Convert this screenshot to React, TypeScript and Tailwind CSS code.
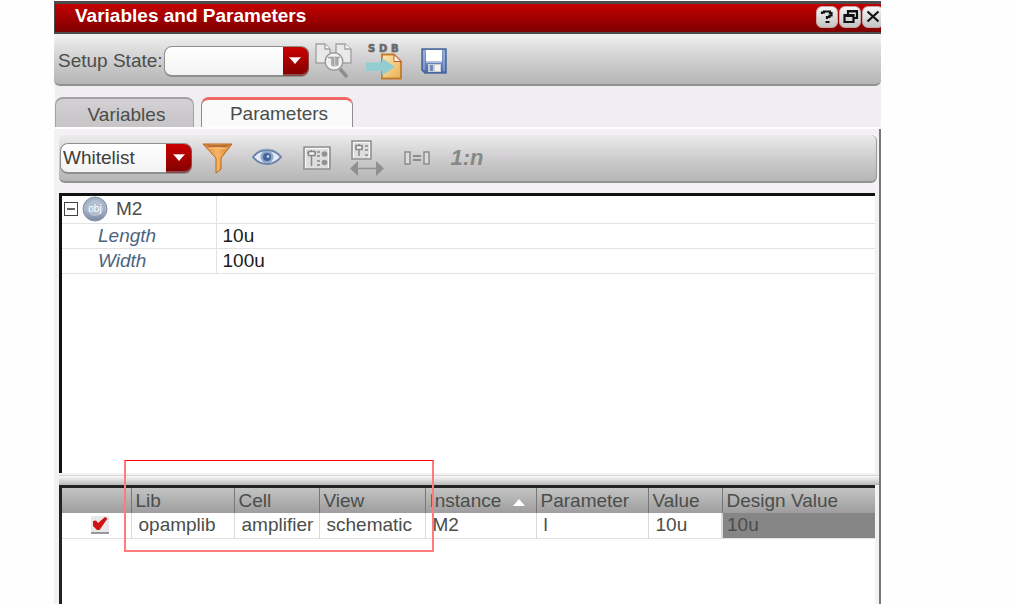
import React, { useState } from "react";

const TOOLBAR =
  "flex h-12 items-center rounded-md border-b-2 border-[#8f928f] bg-linear-to-b from-[#ececec] via-[#cfcdcf] to-[#b4b6b4]";

function DropDown({
  label,
  hidden,
  options,
  width,
}: {
  label: string;
  hidden?: boolean;
  options: string[];
  width: string;
}) {
  const id = label.toLowerCase().replace(/\W+/g, "-");
  return (
    <>
      {!hidden && (
        <label htmlFor={id} className="whitespace-nowrap">
          {label}
        </label>
      )}
      <div className={`relative ml-px h-[31px] shrink-0 ${width}`}>
        <select
          id={id}
          aria-label={hidden ? label : undefined}
          className="h-full w-full appearance-none rounded-lg border border-b-2 border-[#8e908e] bg-linear-to-b from-white to-[#f3f3f3] pl-0.5 pr-7 text-[19px] leading-6 text-[#3c403c]"
        >
          {options.map((o) => (
            <option key={o}>{o}</option>
          ))}
        </select>
        <span className="pointer-events-none absolute inset-y-px right-0 flex w-[26px] items-center justify-center rounded-r-lg border-r border-b-2 border-[#8a4a4a] bg-linear-to-b from-[#cc0000] to-[#860000]">
          <svg width="12" height="7" viewBox="0 0 12 7">
            <path d="M0 0h12L6 7z" fill="#fff" />
            <path d="M1 0.5h10" stroke="#e9b0b0" />
          </svg>
        </span>
      </div>
    </>
  );
}

function IconButton({ label, children }: { label: string; children: React.ReactNode }) {
  return (
    <button type="button" aria-label={label} className="flex h-10 w-[50px] shrink-0 items-center justify-center">
      {children}
    </button>
  );
}

const SearchDocsIcon = () => (
  <svg width="37" height="36" viewBox="0 0 37 36" fill="none">
    <g stroke="#a3a3a3" strokeWidth="1.4" fill="#e9e9e9">
      <path d="M1 1h9l5 5v14H1z" />
      <path d="M21 1h9l6 5v14H21z" />
      <path d="M10 1v5h5M30 1v5h6" fill="#fff" />
    </g>
    <path d="M25 26l7 8" stroke="#8d8d8d" strokeWidth="3.5" />
    <circle cx="19" cy="18.500" r="7" fill="#d7d7d7" stroke="#f2f2f2" strokeWidth="3" />
    <circle cx="19" cy="18.500" r="8.800" stroke="#9a9a9a" strokeWidth="1.500" />
    <path d="M13 14.500h4v8M21 22.500v-8h4" stroke="#a0a0a0" strokeWidth="1.500" />
    <path d="M18.500 14v9M22.500 15v8" stroke="#a0a0a0" strokeWidth="1.300" />
    <path d="M15 16v7" stroke="#f7f7f7" strokeWidth="1.500" />
  </svg>
);

const SdbIcon = () => (
  <svg width="38" height="37" viewBox="0 0 38 37">
    <defs>
      <linearGradient id="page" x1="0" y1="0" x2="1" y2="1">
        <stop offset="0" stopColor="#fbe9b4" />
        <stop offset="1" stopColor="#e9b052" />
      </linearGradient>
    </defs>
    <g fontFamily="DejaVu Sans" fontWeight="bold" fontSize="10" fill="#6a6a6a" stroke="#6a6a6a" strokeWidth="0.7">
      <text x="3" y="8.500">S</text>
      <text x="14" y="8.500">D</text>
      <text x="26" y="8.500">B</text>
    </g>
    <path d="M17 11.500h12l7 7v17H17z" fill="url(#page)" stroke="#c47a28" strokeWidth="1.800" />
    <path d="M29 11.500l7 7h-7z" fill="#fff" stroke="#c8552a" />
    <path d="M1 19.500h16v-4.500l13 8.700-13 8.800V28H1z" fill="#94cdd0" />
  </svg>
);

const SaveIcon = () => (
  <svg width="26" height="26" viewBox="0 0 26 26">
    <defs>
      <linearGradient id="disk" x1="0" y1="0" x2="0" y2="1">
        <stop offset="0" stopColor="#8aa5d0" />
        <stop offset="1" stopColor="#4a6cab" />
      </linearGradient>
    </defs>
    <path d="M1 1h24v24H4l-3-3z" fill="url(#disk)" stroke="#47659c" strokeWidth="1.500" />
    <path d="M5 2h16v11H5z" fill="#fff" />
    <path d="M5 13h16v2H5z" fill="#aebfdd" />
    <path d="M3 3v19M23 3v20" stroke="#a9bfe2" />
    <path d="M7 16h13v8H7z" fill="#c9cdd4" />
    <path d="M9 17h3v6H9z" fill="#6f8bbb" />
    <path d="M14 17h5v6h-5z" fill="#f3f3f3" />
  </svg>
);

const FunnelIcon = () => (
  <svg width="31" height="31" viewBox="0 0 31 31">
    <defs>
      <linearGradient id="funnel" x1="0" y1="0" x2="1" y2="0">
        <stop offset="0" stopColor="#d98434" />
        <stop offset="0.5" stopColor="#f8b566" />
        <stop offset="1" stopColor="#d07a2a" />
      </linearGradient>
    </defs>
    <path d="M1 1h29L19 15v11l-5 4V15z" fill="url(#funnel)" stroke="#b8651c" strokeWidth="1" />
    <path d="M4 2h23l-3 2H7z" fill="#b5703a" />
    <path d="M6 5h19l-1 1H7z" fill="#f7bd7a" />
  </svg>
);

const EyeIcon = () => (
  <svg width="30" height="20" viewBox="0 0 30 20">
    <path d="M1 9C5 4 10 2 15 2s10 2 14 7c-4 5-9 7-14 7S5 14 1 9z" fill="#e4eaf3" stroke="#6781ab" strokeWidth="2" />
    <path d="M5 4C10 0 20 0 25 4" fill="none" stroke="#a5b4cc" />
    <circle cx="15" cy="9" r="6.500" fill="#8da6ca" />
    <circle cx="15" cy="9" r="4" fill="#45659a" />
    <circle cx="16" cy="8.500" r="1.300" fill="#d8e3f2" />
  </svg>
);

const PropertiesIcon = () => (
  <svg width="28" height="24" viewBox="0 0 28 24" fill="none">
    <path d="M1 1h26v22H1z" fill="#dedede" stroke="#8e928e" strokeWidth="1.600" />
    <path d="M2.500 22V2.500H25.500V22" stroke="#f7f7f7" />
    <g stroke="#858985" strokeWidth="1.500">
      <path d="M8.500 4v2M4 7h2M11 7h2M8.500 10v10M14 6h3M14 10h3M14 15h3M14 19h3" />
      <path d="M5.500 5.500h6.500v4H5.500z" fill="#f5f5f5" />
    </g>
    <circle cx="21.500" cy="8" r="2.800" fill="#909490" />
    <circle cx="21.500" cy="16.500" r="2.800" fill="#909490" />
  </svg>
);

const StretchIcon = () => (
  <svg width="34" height="36" viewBox="0 0 34 36" fill="none">
    <path d="M2 1h19v18H2z" fill="#dedede" stroke="#8e928e" strokeWidth="1.600" />
    <path d="M3.500 18V2.500H19.500V18" stroke="#f7f7f7" />
    <g stroke="#858985" strokeWidth="1.500">
      <path d="M9 4v2M5 7h2M11 7h2M9 10v6M15 6h3M15 10h3M15 15h3" />
      <path d="M6 5.500h6v4H6z" fill="#f5f5f5" />
    </g>
    <path d="M5 28.500h24" stroke="#8e928e" strokeWidth="1.500" />
    <path d="M0 28.500L8 21v15zM34 28.500L26 21v15z" fill="#8e928e" />
  </svg>
);

const EqualIcon = () => (
  <svg width="26" height="14" viewBox="0 0 26 14" fill="none" stroke="#8a8e8a" strokeWidth="1.500">
    <path d="M1 1h5v12H1zM20 1h5v12h-5z" fill="#dcdcdc" />
    <path d="M9 5h8M9 9h8" strokeWidth="2" />
  </svg>
);

const ObjectIcon = () => (
  <svg width="26" height="26" viewBox="0 0 26 26">
    <defs>
      <linearGradient id="ball" x1="0" y1="0" x2="0" y2="1">
        <stop offset="0" stopColor="#a3afc5" />
        <stop offset="0.5" stopColor="#a9b5ca" />
        <stop offset="1" stopColor="#7c8aa5" />
      </linearGradient>
    </defs>
    <circle cx="13" cy="13" r="12" fill="url(#ball)" stroke="#8290aa" />
    <circle cx="13" cy="12" r="8" fill="#b3bed1" />
    <text x="13" y="16" textAnchor="middle" fontFamily="Liberation Sans" fontSize="10" fill="#ffffff">
      obj
    </text>
  </svg>
);

const WINDOW_BUTTONS = [
  { label: "Help", d: "M6 8V6.500h2V5.500h6V7H15.500v2.500h-2v1.500h-2.500V13M9.500 16h4" },
  { label: "Restore", d: "M9 8V5h9v7h-3M9 5.500h9M5.500 9h9v7h-9zM5.500 10h9" },
  { label: "Close", d: "M5.500 5.500l11 10M16.500 5.500l-11 10" },
];

const COLUMNS = [
  { name: "", width: "w-[69px]" },
  { name: "Lib", width: "w-[103px]" },
  { name: "Cell", width: "w-[85px]" },
  { name: "View", width: "w-[106px]" },
  { name: "Instance", width: "w-[111px]" },
  { name: "Parameter", width: "w-[112px]" },
  { name: "Value", width: "w-[74px]" },
  { name: "Design Value", width: "" },
];

export default function App() {
  const [open, setOpen] = useState(true);
  return (
    <div className="flex min-h-screen flex-col bg-[#fefefe] pl-[54px] pr-[132px] pt-px font-['Liberation_Sans',sans-serif] text-[19px] leading-6 text-[#4a4e4a]">
      <header className="flex h-[33px] items-center overflow-hidden border-t-[3px] border-b-2 border-l border-[#4c4c4c] bg-linear-to-b from-[#c40000] to-[#7e0000] pl-5">
        <h1 className="-mt-1 whitespace-nowrap font-bold text-white">Variables and Parameters</h1>
        <div className="-mr-[3px] -mt-0.5 ml-auto flex gap-px">
          {WINDOW_BUTTONS.map((b) => (
            <button
              key={b.label}
              type="button"
              aria-label={b.label}
              className="flex size-[22px] items-center justify-center rounded-md border border-[#c9a5a5] bg-linear-to-b from-[#f6f6f6] to-[#c4c4c4]"
            >
              <svg width="22" height="22" viewBox="0 0 22 22" fill="none" stroke="#111" strokeWidth="2.2" className="shrink-0">
                <path d={b.d} />
              </svg>
            </button>
          ))}
        </div>
      </header>

      <div className="bg-[#f0eef0] pt-1">
        <div className={`${TOOLBAR} pl-1`}>
          <DropDown label="Setup State:" options={[""]} width="w-[145px]" />
          <IconButton label="Browse setup states">
            <SearchDocsIcon />
          </IconButton>
          <IconButton label="Load from SDB">
            <SdbIcon />
          </IconButton>
          <IconButton label="Save">
            <SaveIcon />
          </IconButton>
        </div>
        <div role="tablist" className="flex h-[41px] items-end gap-[7px] border-l border-[#f8f8f8] pt-[11px]">
          <button
            role="tab"
            type="button"
            aria-selected="false"
            className="h-[30px] w-[139px] rounded-t-lg border border-b-0 border-t-2 border-[#a3a1a3] bg-linear-to-b from-[#d3d1d3] to-[#c6c4c6] pt-1 pl-1"
          >
            Variables
          </button>
          <button
            role="tab"
            type="button"
            aria-selected="true"
            className="h-[30px] w-[152px] rounded-t-lg border border-b-0 border-t-[3px] border-x-[#8e8e8e] border-t-[#ee6666] bg-[#fbfafb] pl-1"
          >
            Parameters
          </button>
        </div>
      </div>

      <main className="mt-0.5 flex grow flex-col border-r-2 border-[#777] bg-[#f3f1f3] pl-[5px] pt-1.5">
        <div className={`${TOOLBAR} mr-0.5 border-r border-r-[#999]`}>
          <DropDown label="Filter list" hidden options={["Whitelist"]} width="w-[132px]" />
          <IconButton label="Filter">
            <FunnelIcon />
          </IconButton>
          <IconButton label="Show">
            <EyeIcon />
          </IconButton>
          <IconButton label="Edit properties">
            <PropertiesIcon />
          </IconButton>
          <IconButton label="Stretch properties">
            <StretchIcon />
          </IconButton>
          <IconButton label="Match parameters">
            <EqualIcon />
          </IconButton>
          <IconButton label="Ratio parameters">
            <span className="text-[22px] font-bold italic text-[#858985]">1:n</span>
          </IconButton>
        </div>

        <section className="mr-1 mt-2.5 min-h-[280px] border-l-[3px] border-t-[3px] border-[#111] bg-white">
          <table className="w-full table-fixed border-collapse">
            <colgroup>
              <col className="w-[154px]" />
              <col />
            </colgroup>
            <tbody>
              <tr className="h-[27px] border-b border-[#e2e2e2]">
                <td className="border-r border-[#e2e2e2] p-0">
                  <div className="flex items-center">
                    <button
                      type="button"
                      aria-label="Toggle M2"
                      onClick={() => setOpen(!open)}
                      className="ml-0.5 mr-1 flex size-3.5 items-center justify-center border border-[#444]"
                    >
                      <svg width="10" height="10" viewBox="0 0 10 10" stroke="#333" strokeWidth="1.500">
                        <path d={open ? "M1 5h8" : "M1 5h8M5 1v8"} />
                      </svg>
                    </button>
                    <ObjectIcon />
                    <span className="ml-2">M2</span>
                  </div>
                </td>
                <td />
              </tr>
              {open &&
                [
                  ["Length", "10u"],
                  ["Width", "100u"],
                ].map(([name, value]) => (
                  <tr key={name} className="h-[25px] border-b border-[#e2e2e2]">
                    <td className="border-r border-[#e2e2e2] p-0 pl-9 italic text-[#4c6480]">{name}</td>
                    <td className="p-0 pl-1.5 text-[#1c1c1c]">{value}</td>
                  </tr>
                ))}
            </tbody>
          </table>
        </section>

        <div className="mt-0.5 h-[10px] border-t border-[#d8d4d8] bg-linear-to-b from-[#fafafa] to-[#b8bab8]" />

        <section className="relative mr-1 grow border-l-[3px] border-t-[3px] border-[#222] bg-white">
          <table className="w-full table-fixed border-collapse text-left">
            <thead>
              <tr className="h-[25px] bg-linear-to-b from-[#c2c4c2] to-[#9f9d9f]">
                {COLUMNS.map((c, i) => (
                  <th
                    key={c.name}
                    scope="col"
                    aria-label={c.name || "Enabled"}
                    className={`${c.width} whitespace-nowrap p-0 font-normal ${i ? "border-l border-[#777] pl-1" : ""}`}
                  >
                    {c.name === "Instance" ? (
                      <span className="flex items-center gap-3">
                        Instance
                        <svg width="12" height="7" viewBox="0 0 12 7" className="mt-1">
                          <path d="M6 0l6 7H0z" fill="#fff" />
                        </svg>
                      </span>
                    ) : (
                      c.name
                    )}
                  </th>
                ))}
              </tr>
            </thead>
            <tbody>
              <tr className="h-[25px] border-b border-[#e4dfe4]">
                <td className="p-0">
                  <label className="relative ml-[29px] flex size-[18px] items-center justify-center border-b-2 border-[#999] bg-[#e8e8e8]">
                    <input type="checkbox" defaultChecked aria-label="Enable M2" className="peer absolute inset-0 appearance-none" />
                    <svg width="16" height="14" viewBox="0 0 16 14" className="invisible peer-checked:visible">
                      <path d="M1 4l3-0.500 2 2.500L13 0l2.500 1.500L7.500 13H5L1 9z" fill="#d01212" />
                    </svg>
                  </label>
                </td>
                {["opamplib", "amplifier", "schematic", "M2", "l", "10u"].map((v, i) => (
                  <td key={i} className="whitespace-nowrap border-l border-[#ddd8dd] p-0 pl-[7px]">
                    {v}
                  </td>
                ))}
                <td className="border-l-2 border-[#ddd8dd] bg-[#868686] p-0 pl-1">10u</td>
              </tr>
            </tbody>
          </table>
          <div className="pointer-events-none absolute -top-7 left-[62px] h-[92px] w-[310px] border-2 border-t border-[#ff7c7c] border-t-[#ff0000]" />
        </section>
      </main>
    </div>
  );
}
